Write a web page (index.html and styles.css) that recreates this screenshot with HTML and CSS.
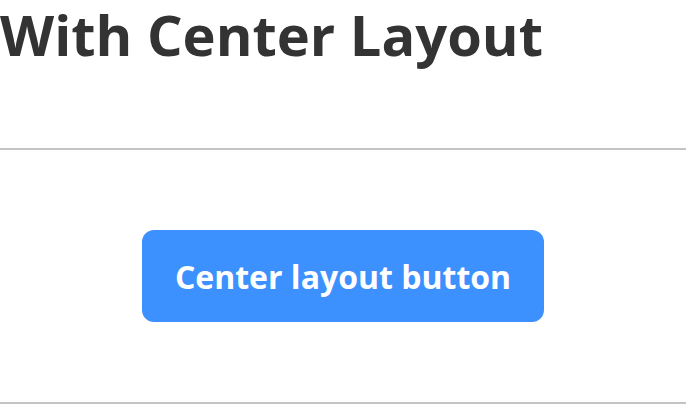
FILE: index.html
```html
<!DOCTYPE html>
<html>
<head>
<meta charset="utf-8">
<link rel="stylesheet" href="styles.css">
</head>
<body>
<h1 class="title">With Center Layout</h1>
<div class="divider"></div>
<section class="center">
  <button class="btn">Center layout button</button>
</section>
<div class="divider"></div>
</body>
</html>
```

FILE: styles.css
```css
html, body {
  margin: 0;
  padding: 0;
  background: #fff;
}
body {
  font-family: "Open Sans", "Noto Sans", sans-serif;
  color: #333;
}
.title {
  margin: 0;
  font-size: 56px;
  font-weight: 700;
  line-height: 68px;
  height: 148px;
}
.divider {
  height: 2px;
  background: #c4c4c4;
}
.center {
  display: flex;
  justify-content: center;
  align-items: center;
  height: 252px;
}
.btn {
  font-family: "Open Sans", "Noto Sans", sans-serif;
  font-size: 32px;
  font-weight: 700;
  color: #fff;
  background: #3d91ff;
  border: none;
  border-radius: 12px;
  width: 402px;
  height: 92px;
  padding: 0;
}
```
